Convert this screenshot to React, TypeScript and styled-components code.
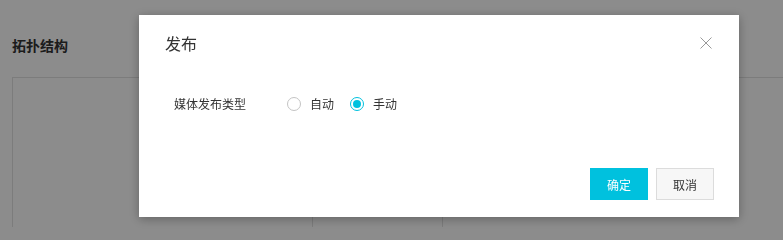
import React from "react";
import styled, { createGlobalStyle } from "styled-components";

const Global = createGlobalStyle`
  html, body { margin: 0; padding: 0; background: #fff; height: 228px; overflow: hidden; }
  body { font-family: "Noto Sans CJK SC", "Noto Sans", sans-serif; color: #333; }
  * { box-sizing: border-box; }
`;

const Page = styled.div`
  width: 783px;
  height: 228px;
  padding: 0 0 0 12px;
  overflow: hidden;
`;

const PageTitle = styled.h2`
  margin: 0;
  padding-top: 35px;
  font-size: 14px;
  line-height: 20px;
  font-weight: 700;
  color: #333;
`;

const Panels = styled.div`
  margin-top: 22px;
  display: grid;
  grid-template-columns: 300px 130px 1fr;
  height: 150px;
`;

const Panel = styled.div`
  border-top: 1px solid #e2e2e2;
  border-left: 1px solid #e2e2e2;
`;

const Overlay = styled.div`
  position: fixed;
  inset: 0;
  background: rgba(0, 0, 0, 0.45);
`;

const Modal = styled.div`
  position: absolute;
  left: 139px;
  top: 15px;
  width: 600px;
  height: 202px;
  background: #fff;
  box-shadow: 0 2px 10px rgba(0, 0, 0, 0.3);
  display: flex;
  flex-direction: column;
`;

const Header = styled.div`
  display: flex;
  align-items: center;
  justify-content: space-between;
  padding: 17px 27px 0 26px;
`;

const Title = styled.div`
  font-size: 16px;
  line-height: 22px;
  color: #333;
`;

const Close = styled.button`
  border: 0;
  background: none;
  padding: 0;
  width: 12px;
  height: 12px;
  display: flex;
  cursor: pointer;
`;

const Body = styled.div`
  padding: 40px 0 0 35px;
  display: flex;
  align-items: center;
`;

const Label = styled.div`
  width: 113px;
  font-size: 12px;
  line-height: 20px;
  color: #333;
`;

const RadioGroup = styled.div`
  display: flex;
  align-items: center;
  gap: 16px;
`;

const RadioItem = styled.label`
  display: flex;
  align-items: center;
  gap: 9px;
  font-size: 12px;
  line-height: 20px;
  color: #333;
`;

const RadioCircle = styled.span<{ $checked?: boolean }>`
  width: 14px;
  height: 14px;
  border-radius: 50%;
  border: 1px solid ${(p) => (p.$checked ? "#00c1de" : "#c4c4c4")};
  background: #fff;
  display: flex;
  align-items: center;
  justify-content: center;
  &::after {
    content: "";
    width: 8px;
    height: 8px;
    border-radius: 50%;
    background: ${(p) => (p.$checked ? "#00c1de" : "transparent")};
  }
`;

const Footer = styled.div`
  margin-top: auto;
  padding: 0 25px 17px 0;
  display: flex;
  justify-content: flex-end;
  gap: 8px;
`;

const Button = styled.button<{ $primary?: boolean }>`
  height: 32px;
  padding: 0 16px;
  font-family: inherit;
  font-size: 12px;
  border: 1px solid ${(p) => (p.$primary ? "#00c1de" : "#dcdcdc")};
  background: ${(p) => (p.$primary ? "#00c1de" : "#f7f7f7")};
  color: ${(p) => (p.$primary ? "#fff" : "#333")};
  cursor: pointer;
`;

export default function App() {
  return (
    <>
      <Global />
      <Page>
        <PageTitle>拓扑结构</PageTitle>
        <Panels>
          <Panel />
          <Panel />
          <Panel />
        </Panels>
      </Page>
      <Overlay>
        <Modal>
          <Header>
            <Title>发布</Title>
            <Close aria-label="关闭">
              <svg width="12" height="12" viewBox="0 0 12 12">
                <path d="M0.5 0.5 L11.5 11.5 M11.5 0.5 L0.5 11.5" stroke="#999" strokeWidth="1" fill="none" />
              </svg>
            </Close>
          </Header>
          <Body>
            <Label>媒体发布类型</Label>
            <RadioGroup>
              <RadioItem>
                <RadioCircle />
                自动
              </RadioItem>
              <RadioItem>
                <RadioCircle $checked />
                手动
              </RadioItem>
            </RadioGroup>
          </Body>
          <Footer>
            <Button $primary>确定</Button>
            <Button>取消</Button>
          </Footer>
        </Modal>
      </Overlay>
    </>
  );
}
